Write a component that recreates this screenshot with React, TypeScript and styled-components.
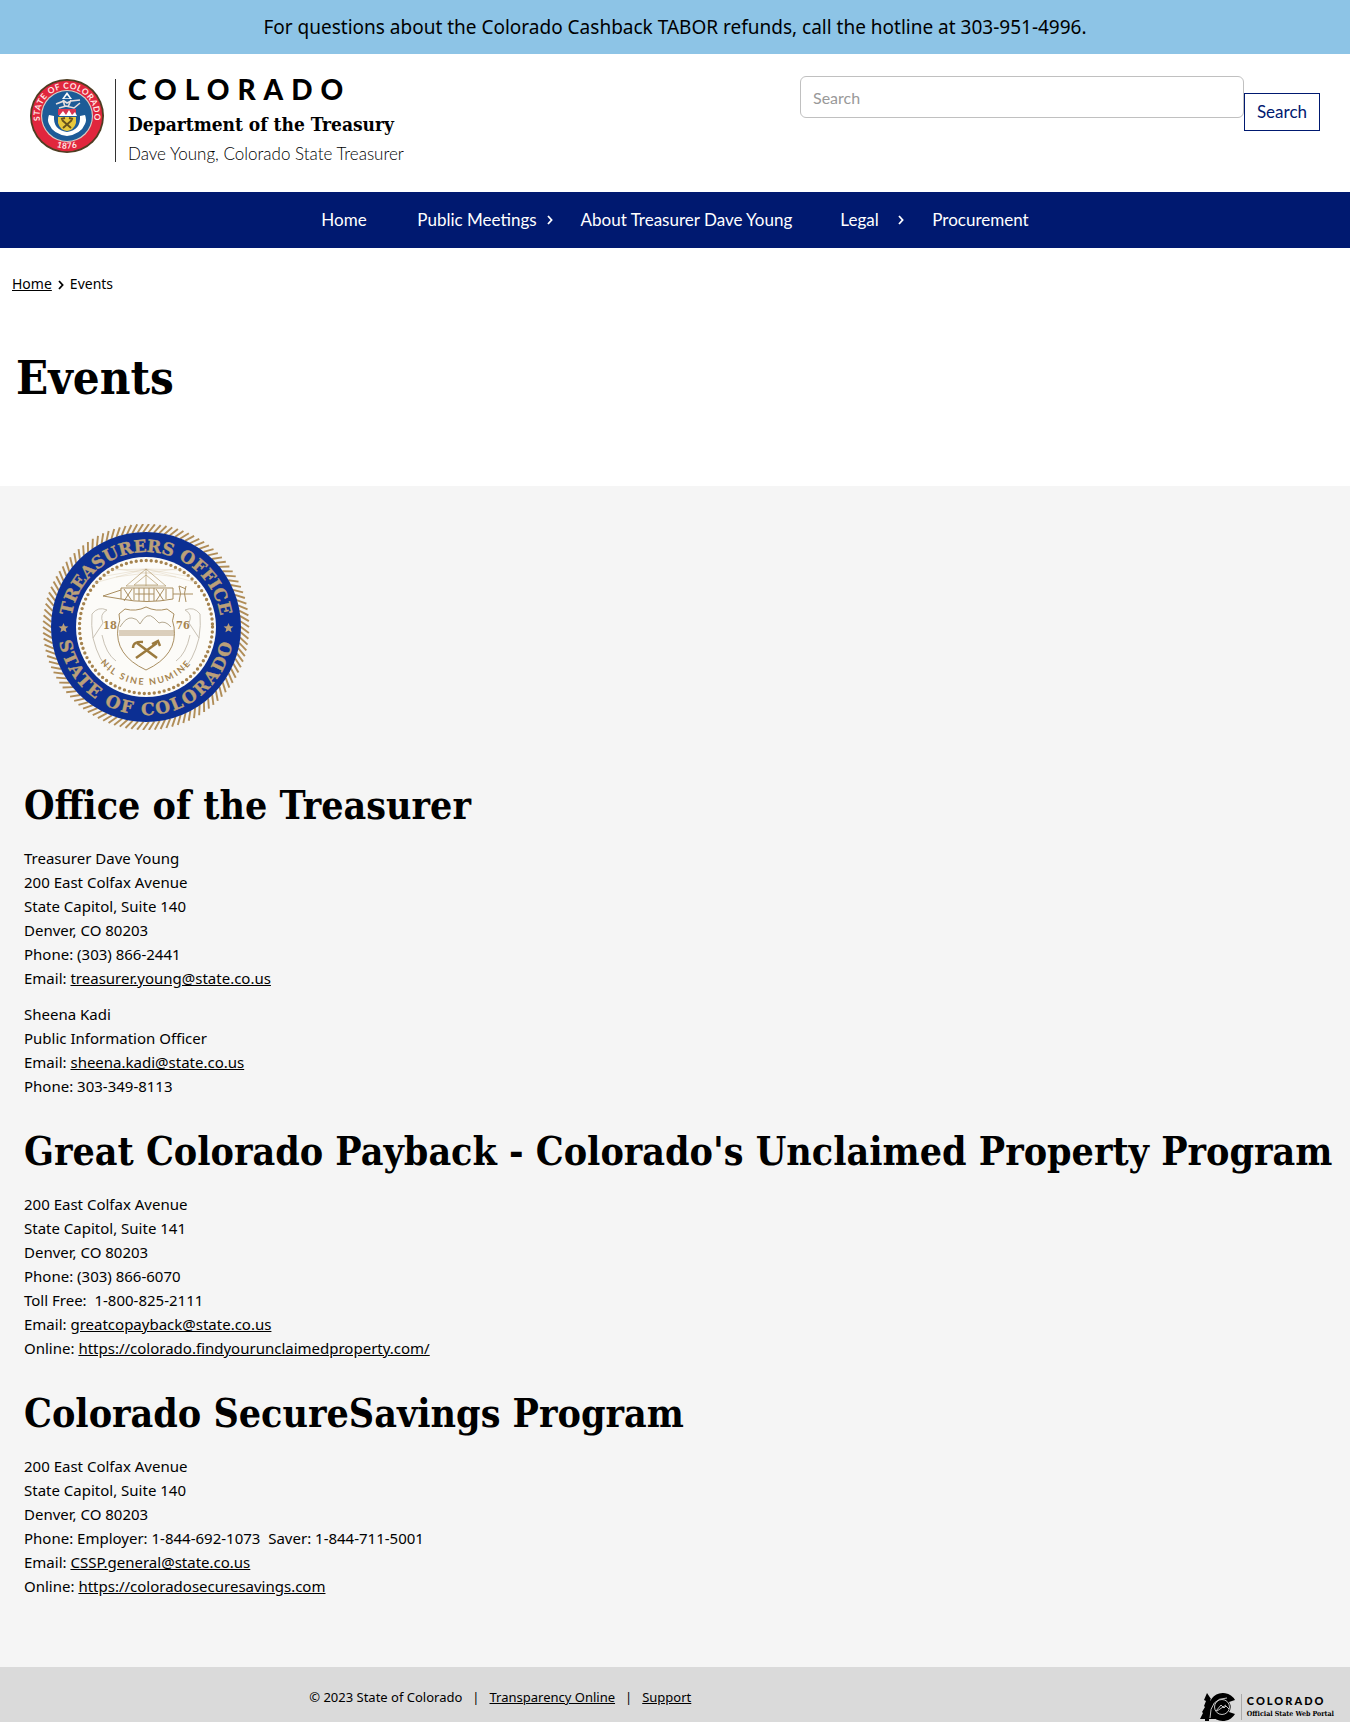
import React from "react";
import styled, { createGlobalStyle } from "styled-components";

const sans = `Lato, "Open Sans", sans-serif`;
const humanist = `"Noto Sans", "Open Sans", sans-serif`;
const slab = `"DejaVu Serif Condensed", "DejaVu Serif", serif`;
const wideSlab = `"DejaVu Serif", serif`;

const GlobalStyle = createGlobalStyle`
  *, *::before, *::after { box-sizing: border-box; }
  body { margin: 0; background: #fff; color: #000; font-family: ${humanist}; font-size: 15px; line-height: 24px; }
  a { color: inherit; }
  h1, h2, p, ul, ol { margin: 0; padding: 0; }
  ul, ol { list-style: none; }
`;

const Banner = styled.div`
  padding: 12px 16px;
  background: #8dc4e6;
  text-align: center;
  font-size: 19px;
  line-height: 30px;
`;

const Header = styled.header`
  display: flex;
  justify-content: space-between;
  align-items: flex-start;
  gap: 24px;
  padding: 22px 30px 30px;
  font-family: ${sans};
`;

const Brand = styled.a`
  display: flex;
  align-items: flex-start;
  padding-top: 3px;
  text-decoration: none;
  svg { flex: none; }
`;

const BrandText = styled.span`
  display: flex;
  flex-direction: column;
  margin-left: 11px;
  padding-left: 12px;
  border-left: 1px solid #333;
`;

const Wordmark = styled.span`
  font-size: 28px;
  line-height: 20px;
  font-weight: 900;
  letter-spacing: 8px;
`;

const Agency = styled.span`
  padding-top: 13px;
  font-family: ${slab};
  font-size: 19px;
  line-height: 24px;
  font-weight: 700;
`;

const Tagline = styled.span`
  padding-top: 10px;
  font-size: 17px;
  line-height: 16px;
  font-weight: 300;
`;

const SearchForm = styled.form`
  display: flex;
  align-items: flex-start;
  flex: 0 1 520px;
`;

const SearchInput = styled.input`
  flex: 1;
  min-width: 0;
  height: 42px;
  padding: 0 12px;
  border: 1px solid #c0c0c0;
  border-radius: 6px;
  font: 16px/24px ${sans};
  &::placeholder { color: #999; opacity: 1; }
`;

const SearchButton = styled.button`
  height: 38px;
  margin-top: 17px;
  padding: 0 12px;
  border: 1px solid #001970;
  background: #fff;
  color: #001970;
  font: 17px/24px ${sans};
`;

const Nav = styled.nav`
  background: #001970;
  color: #fff;
  font-family: ${sans};
`;

const NavList = styled.ul`
  display: flex;
  flex-wrap: wrap;
  justify-content: center;
`;

const NavItem = styled.li<{ $menu?: boolean }>`
  display: flex;
  align-items: center;
  gap: 10px;
  padding: 16px ${(p) => (p.$menu ? "4px" : "24px")} 16px 24px;
`;

const NavLink = styled.a`
  min-width: 48px;
  font-size: 17px;
  line-height: 24px;
  text-decoration: none;
`;

const Breadcrumbs = styled.ol`
  display: flex;
  gap: 6px;
  padding: 24px 12px;
  font-size: 14px;
  svg { display: block; margin-top: 8px; }
`;

const PageTitle = styled.h1`
  padding: 28px 16px 78px;
  font-family: ${slab};
  font-size: 47px;
  line-height: 60px;
  font-weight: 700;
`;

const Contacts = styled.section`
  padding: 38px 12px 69px 24px;
  background: #f5f5f5;
`;

const SealFrame = styled.div`
  padding: 0 18px 22px;
  svg { display: block; }
`;

const Heading = styled.h2`
  padding: 31px 0 19px;
  font-family: ${slab};
  font-size: 39px;
  line-height: 44px;
  font-weight: 700;
`;

const Address = styled.p`
  & + & { margin-top: 12px; }
`;

const Footer = styled.footer`
  display: grid;
  grid-template-columns: 3fr 1fr;
  padding: 18px 16px 0 0;
  background: #dadada;
  font-size: 13px;
`;

const FooterLinks = styled.div`
  display: flex;
  justify-content: center;
  gap: 10px;
`;

const Portal = styled.a`
  display: flex;
  justify-self: end;
  align-items: center;
  padding: 8px 0 2px;
  font-family: ${sans};
  text-decoration: none;
`;

const PortalText = styled.span`
  display: flex;
  flex-direction: column;
  margin-left: 5px;
  padding-left: 5px;
  border-left: 1px solid #aaa;
`;

const PortalMark = styled.span`
  font-size: 11px;
  line-height: 14px;
  font-weight: 900;
  letter-spacing: 2px;
`;

const PortalNote = styled.span`
  font-family: ${slab};
  font-size: 7px;
  line-height: 12px;
  font-weight: 700;
`;

function StateSeal() {
  return (
    <svg width="74" height="74" viewBox="-37 -37 74 74" role="img" aria-label="State of Colorado seal">
      <defs>
        <path id="st" d="M-25.5 10 A27.4 27.4 0 1 1 25.5 10" />
        <path id="sb" d="M-20 26 A33 33 0 0 0 20 26" />
      </defs>
      <circle r="37" fill="#4f3d22" />
      <circle r="35.2" fill="#e1263d" />
      <circle r="26" fill="#d9cfc4" />
      <circle r="24.9" fill="#1d5b97" />
      <g fill="#ffe9e6" fontFamily={sans} fontSize="8.4" fontWeight="700" letterSpacing=".5">
        <text textAnchor="middle"><textPath href="#st" startOffset="50%">STATE OF COLORADO</textPath></text>
        <text textAnchor="middle"><textPath href="#sb" startOffset="50%">1876</textPath></text>
      </g>
      <path d="M-18-1q-2 5 0 9q4 10 18 12q14-2 18-12q2-4 0-9l-5 1q1 14-13 16q-14-2-13-16z" fill="#fff" />
      <path d="M0-24l5 7h-10z" fill="#fff" />
      <path d="M0-21l2.6 3.2h-5.2z" fill="#1d5b97" />
      <path d="M-11-12l8-3 3 2 4-2 9-1M-8-8l7-2 8 2 6-5M-4-16l2 7M4-16l-3 7" stroke="#e7dfdf" strokeWidth="1.6" fill="none" />
      <path d="M-9-7h18v6h-18z" fill="#d83350" />
      <path d="M-8 0l4-5 3 4 3-5 3 5 3-3 2 4z" fill="#fff" />
      <path d="M-9 1h18v6q-2 7-9 8q-7-1-9-8z" fill="#e7c83c" />
      <path d="M-5 4l9 8M5 4l-9 8" stroke="#65511c" strokeWidth="1.8" />
      <path d="M-6 3l4-1M6 3l-4-1" stroke="#65511c" strokeWidth="2" />
    </svg>
  );
}

const star = "M0-5l1.4 3.2 3.5.3-2.7 2.3.9 3.4-3.1-1.8-3.1 1.8.9-3.4-2.7-2.3 3.5-.3z";

function TreasurerSeal() {
  const gold = "#b08d58";
  const rope = Array.from({ length: 110 }, (_, i) => i * (360 / 110));
  return (
    <svg width="208" height="206" viewBox="-104 -103 208 206" role="img" aria-label="Treasurers Office, State of Colorado seal">
      <defs>
        <path id="tt" d="M-75 0 A75 75 0 0 1 75 0" />
        <path id="tb" d="M-88 0 A88 88 0 0 0 88 0" />
        <path id="tm" d="M-58 0 A58 58 0 0 0 58 0" />
      </defs>
      <g stroke={gold} strokeWidth="1.9">
        {rope.map((a) => (
          <path key={a} d="M-3-94.5L3-103" transform={`rotate(${a})`} />
        ))}
      </g>
      <circle r="95" fill="#0c2f93" />
      <circle r="70" fill="#fcfbf8" />
      <circle r="66.5" fill="none" stroke="#a5834e" strokeWidth="3.4" strokeLinecap="round" strokeDasharray="0 5.05" />
      <g fill="#bba079" stroke="#bba079" strokeWidth=".4" fontFamily={wideSlab} fontWeight="700" fontSize="17">
        <text textAnchor="middle"><textPath href="#tt" startOffset="50%">TREASURERS OFFICE</textPath></text>
        <text letterSpacing="2" textAnchor="middle"><textPath href="#tb" startOffset="50%">STATE OF COLORADO</textPath></text>
      </g>
      <path d={star} fill="#bba079" transform="translate(-82.5 1)" />
      <path d={star} fill="#bba079" transform="translate(82.5 1)" />
      <g fill="none" stroke="#dccdb2" strokeWidth=".7">
        <path d="M0-58l-52 14M0-58l-46 8M0-58l-38 1M0-58l52 14M0-58l46 8M0-58l38 1M-30-58L30-50M30-58L-30-50" opacity=".6" />
        <path d="M0-58l20 17h-40zM0-52l12 10h-24zM0-58v17" stroke="#b39b6f" />
      </g>
      <g fill="none" stroke="#a98e60" strokeWidth="1">
        <path d="M-25-39h52v11q-26 5-52 0zM-25-37l-18 6 18 3M-22-38l8 12M-14-38l-8 12M10-38l8 12M18-38l-8 12M-12-39v12M-7-39v13M-2-39v13M3-39v13M8-39v13M-11-33h19M20-38v10M27-33h20M33-41q3 7 0 16M40-41q-3 7 0 16M33-41l7 3" />
        <path d="M-27-13l6-5q11 3 21-2q10 5 21 2l7 5q-3 7 0 13q4 28-28 43q-32-15-28-43q3-6 1-13z" />
        <path d="M-27 4h55M-27 6h55M-27 8h55" strokeWidth=".8" />
        <path d="M-26 0q6-10 12-9q5 0 8 6q7-13 14-6l5 5q6-3 12 4" stroke="#b5a991" />
        <path d="M-54-13q6-8 15-4q-8 4-4 13l-10 15q-2-13-1-24M54-13q-6-8-15-4q8 4 4 13l10 15q2-13 1-24M-53 11Q-47 35-36 43M53 11Q47 35 36 43M-44 8Q-40 27-30 34M44 8Q40 27 30 34" stroke="#c9c2b5" />
      </g>
      <path d="M-9 16L11 31M11 16L-10 31" stroke="#9b7a3e" strokeWidth="2.6" />
      <path d="M-13 21q0-7 10-6M6 17l6-3 2 5" stroke="#9b7a3e" strokeWidth="2.4" fill="none" />
      <g fill="#a5834e" fontWeight="700" textAnchor="middle">
        <text x="-36" y="2" fontSize="11" fontFamily={slab}>18</text>
        <text x="37" y="2" fontSize="11" fontFamily={slab}>76</text>
        <text fontSize="9" letterSpacing="2" fontFamily={sans}><textPath href="#tm" startOffset="50%">NIL SINE NUMINE</textPath></text>
      </g>
    </svg>
  );
}

function PortalLogo() {
  return (
    <svg width="36" height="28" viewBox="0 0 36 28" aria-hidden="true">
      <path d="M7 0l4 6-1 1 3 4-1 1 2 5-1 1 3 8H9v2H5v-2H0l3-6-1-1 3-5-1-1 2-5-2-1z" />
      <path d="M35 7A14 14 0 1 0 35 21L29 19A9 9 0 0 0 29 9z" />
      <g fill="none" stroke="#dadada" strokeWidth=".9">
        <circle cx="22" cy="14" r="7.5" />
        <path d="M10 25Q10 5 27 5M16 18l5-6 3 3 2-2 3 3M17 18l9-6" />
      </g>
    </svg>
  );
}

function Chevron() {
  return (
    <svg width="6" height="10" viewBox="0 0 6 10" fill="none" stroke="currentColor" strokeWidth="1.8" aria-hidden="true">
      <path d="M1 1l3.6 4L1 9" />
    </svg>
  );
}

const navItems = [
  { label: "Home" },
  { label: "Public Meetings", menu: true },
  { label: "About Treasurer Dave Young" },
  { label: "Legal", menu: true },
  { label: "Procurement" },
];

export default function App() {
  return (
    <>
      <GlobalStyle />
      <Banner>For questions about the Colorado Cashback TABOR refunds, call the hotline at 303-951-4996.</Banner>
      <Header>
        <Brand href="#">
          <StateSeal />
          <BrandText>
            <Wordmark>COLORADO</Wordmark>
            <Agency>Department of the Treasury</Agency>
            <Tagline>Dave Young, Colorado State Treasurer</Tagline>
          </BrandText>
        </Brand>
        <SearchForm role="search" onSubmit={(e) => e.preventDefault()}>
          <SearchInput type="search" aria-label="Search" placeholder="Search" />
          <SearchButton type="submit">Search</SearchButton>
        </SearchForm>
      </Header>
      <Nav aria-label="Main">
        <NavList>
          {navItems.map((item) => (
            <NavItem key={item.label} $menu={item.menu}>
              <NavLink href="#">{item.label}</NavLink>
              {item.menu && <Chevron />}
            </NavItem>
          ))}
        </NavList>
      </Nav>
      <main>
        <Breadcrumbs aria-label="Breadcrumb">
          <li><a href="#">Home</a></li>
          <li aria-hidden="true"><Chevron /></li>
          <li>Events</li>
        </Breadcrumbs>
        <PageTitle>Events</PageTitle>
        <Contacts>
          <SealFrame><TreasurerSeal /></SealFrame>
          <Heading>Office of the Treasurer</Heading>
          <Address>
            Treasurer Dave Young<br />
            200 East Colfax Avenue<br />
            State Capitol, Suite 140<br />
            Denver, CO 80203<br />
            Phone: (303) 866-2441<br />
            Email: <a href="#">treasurer.young@state.co.us</a>
          </Address>
          <Address>
            Sheena Kadi<br />
            Public Information Officer<br />
            Email: <a href="#">sheena.kadi@state.co.us</a><br />
            Phone: 303-349-8113
          </Address>
          <Heading>Great Colorado Payback - Colorado's Unclaimed Property Program</Heading>
          <Address>
            200 East Colfax Avenue<br />
            State Capitol, Suite 141<br />
            Denver, CO 80203<br />
            Phone: (303) 866-6070<br />
            Toll Free: &nbsp;1-800-825-2111<br />
            Email: <a href="#">greatcopayback@state.co.us</a><br />
            Online: <a href="#">https://colorado.findyourunclaimedproperty.com/</a>
          </Address>
          <Heading>Colorado SecureSavings Program</Heading>
          <Address>
            200 East Colfax Avenue<br />
            State Capitol, Suite 140<br />
            Denver, CO 80203<br />
            Phone: Employer: 1-844-692-1073 &nbsp;Saver: 1-844-711-5001<br />
            Email: <a href="#">CSSP.general@state.co.us</a><br />
            Online: <a href="#">https://coloradosecuresavings.com</a>
          </Address>
        </Contacts>
      </main>
      <Footer>
        <FooterLinks>
          <span>© 2023 State of Colorado</span>
          <span>|</span>
          <a href="#">Transparency Online</a>
          <span>|</span>
          <a href="#">Support</a>
        </FooterLinks>
        <Portal href="#">
          <PortalLogo />
          <PortalText>
            <PortalMark>COLORADO</PortalMark>
            <PortalNote>Official State Web Portal</PortalNote>
          </PortalText>
        </Portal>
      </Footer>
    </>
  );
}
